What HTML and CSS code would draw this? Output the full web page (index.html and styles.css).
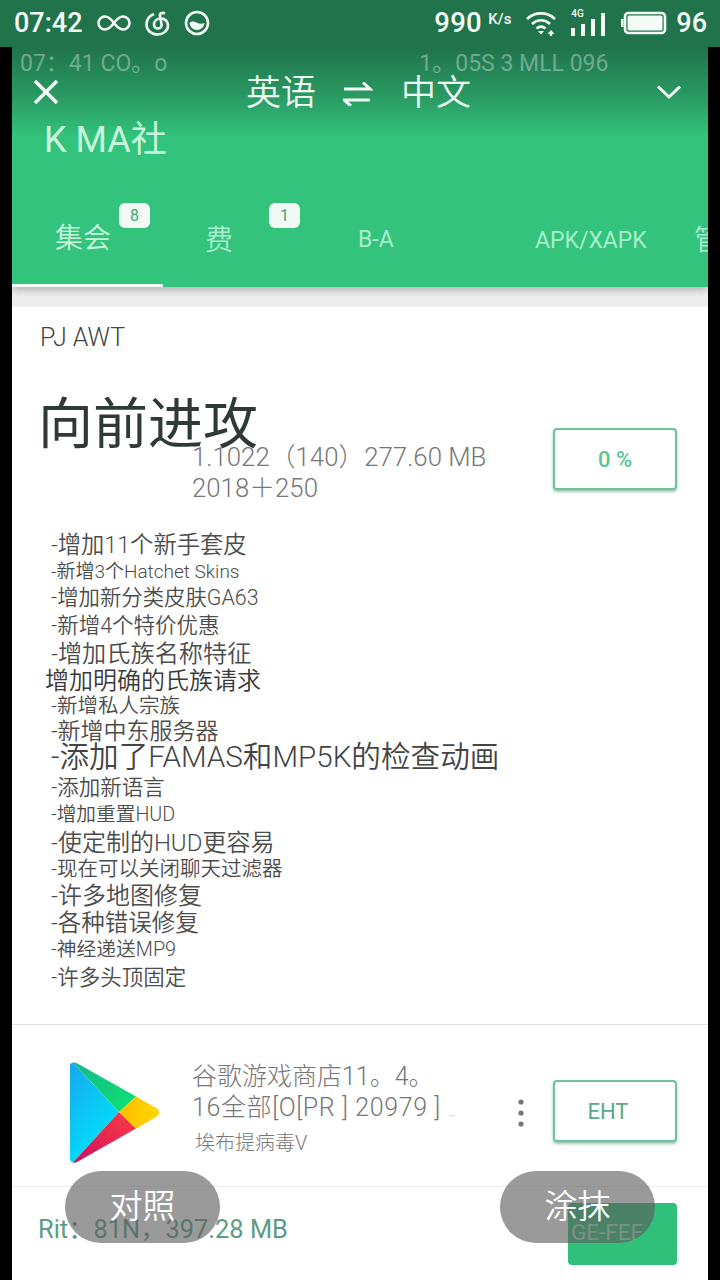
FILE: index.html
```html
<!DOCTYPE html>
<html lang="zh">
<head>
<meta charset="utf-8">
<title>APK</title>
<link rel="stylesheet" href="styles.css">
</head>
<body>
<div class="status">
  <span class="clock">07:42</span>
  <svg class="ic-inf" viewBox="0 0 34 20"><path d="M17 10c-3-4-5.500-6.500-9-6.500a6.500 6.500 0 0 0 0 13c3.500 0 6-2.500 9-6.500s5.500-6.500 9-6.500a6.500 6.500 0 0 1 0 13c-3.500 0-6-2.500-9-6.500z"/></svg>
  <svg class="ic-cloud" viewBox="0 0 26 26"><path d="M9 4C4 6 1.500 10 1.500 14.500C1.500 20.500 6.500 24.500 12.500 24.500C18.500 24.500 23 20.500 23 15.500C23 11.500 20 8.500 16 8.500C12 8.500 9 11 9 14.500C9 17 11 18.500 13 18.500C15.500 18.500 17 16.500 16.500 14L15 6C14.500 3.500 17 2 20 3.500"/></svg>
  <svg class="ic-drop" viewBox="0 0 26 26"><circle cx="13" cy="13" r="11"/><path class="fill" d="M5.500 13c3-2.500 5-1.500 7.500-.3s5 1.300 7.500.3c-.5 4-3.500 7-7.500 7s-7-3-7.500-7z"/></svg>
  <span class="status-gap"></span>
  <span class="speed">990</span>
  <span class="speed-unit">K/s</span>
  <svg class="ic-wifi" viewBox="0 0 32 26"><path d="M2 9c8-7.500 20-7.500 28 0M7 14c5.500-5 12.500-5 18 0M11.500 18.500c3-2.500 6-2.500 9 0"/><path class="fill" d="M13 21h6l-3 3.500zM26 20l3.500 4h-2.300v2h-2.400v-2h-2.300z"/></svg>
  <span class="signal">
    <span class="tag-4g">4G</span>
    <svg class="ic-bars" viewBox="0 0 38 24"><path class="fill" d="M1 15h4v8H1zM11 11h4v12h-4zM21 6h4v17h-4zM31 0h4v23h-4z"/></svg>
  </span>
  <svg class="ic-batt" viewBox="0 0 46 24"><rect x="4" y="2" width="40" height="20" rx="3.500"/><rect class="fill" x="6.500" y="4.500" width="35" height="15" rx="1.500"/><path class="fill" d="M0 8h2.500v8H0z"/></svg>
  <span class="level">96</span>
</div>

<div class="frame">
  <main class="screen">
    <header class="head">
      <div class="ghost"><span>07：41 CO。o</span><span class="ghost-right">1。05S 3 MLL 096</span></div>
      <div class="bar">
        <svg class="ic-close" viewBox="0 0 28 28"><path d="M3 3l22 22M25 3L3 25"/></svg>
        <span class="lang lang-from">英语</span>
        <svg class="ic-swap" viewBox="0 0 30 24"><path d="M1 7h26l-7-6.500M27 18H1l7 6"/></svg>
        <span class="lang">中文</span>
        <svg class="ic-chev" viewBox="0 0 26 16"><path d="M2 2.500l11 10.500L24 2.500"/></svg>
      </div>
      <div class="app-name">K MA社</div>
      <nav class="tabs">
        <div class="tab tab-active"><span class="tab-cn">集会</span><span class="badge b1">8</span></div>
        <div class="tab tab-2"><span class="tab-cn">费</span><span class="badge b2">1</span></div>
        <div class="tab tab-3">B-A</div>
        <div class="tab tab-4">APK/XAPK</div>
        <div class="tab tab-5"><span class="tab-cn">管</span></div>
      </nav>
    </header>
    <div class="strip"></div>
    <section class="card">
      <h2 class="section">PJ AWT</h2>
      <div class="update">
        <h1 class="title">向前进攻</h1>
        <div class="update-row">
          <p class="meta">1.1022（140）277.60 MB<br>2018＋250</p>
          <button class="btn btn-progress">0 %</button>
        </div>
      </div>
      <ul class="changes">
        <li class="l1">-增加11个新手套皮</li>
        <li class="l2">-新增3个Hatchet Skins</li>
        <li class="l3">-增加新分类皮肤GA63</li>
        <li class="l4">-新增4个特价优惠</li>
        <li class="l5">-增加氏族名称特征</li>
        <li class="l6">增加明确的氏族请求</li>
        <li class="l7">-新增私人宗族</li>
        <li class="l8">-新增中东服务器</li>
        <li class="l9">-添加了FAMAS和MP5K的检查动画</li>
        <li class="l10">-添加新语言</li>
        <li class="l11">-增加重置HUD</li>
        <li class="l12">-使定制的HUD更容易</li>
        <li class="l13">-现在可以关闭聊天过滤器</li>
        <li class="l14">-许多地图修复</li>
        <li class="l15">-各种错误修复</li>
        <li class="l16">-神经递送MP9</li>
        <li class="l17">-许多头顶固定</li>
      </ul>
      <div class="app-row">
        <svg class="play" viewBox="0 0 90 102">
          <defs>
            <linearGradient id="pb" x1="0" y1="0" x2="0.6" y2="1"><stop offset="0" stop-color="#16a8ee"/><stop offset="1" stop-color="#00e5fb"/></linearGradient>
            <linearGradient id="pg" x1="0" y1="0" x2="1" y2="1"><stop offset="0" stop-color="#17b98c"/><stop offset="1" stop-color="#0be371"/></linearGradient>
            <linearGradient id="pr" x1="1" y1="0" x2="0" y2="1"><stop offset="0" stop-color="#ff3b44"/><stop offset="1" stop-color="#c9125f"/></linearGradient>
            <linearGradient id="py" x1="0" y1="0" x2="1" y2="0"><stop offset="0" stop-color="#ffbd00"/><stop offset="1" stop-color="#ffd800"/></linearGradient>
          </defs>
          <path fill="url(#pb)" d="M1 4C1 2 2 1 4 .6L50 50 4 100.500C2 100 1 99 1 97z"/>
          <path fill="url(#pg)" d="M4 .6c1-.3 2.500-.2 4 .6L67 34.500 50 50z"/>
          <path fill="url(#pr)" d="M50 50l17 16.500L8 100c-1.500 .8-3 .9-4 .5z"/>
          <path fill="url(#py)" d="M67 34.500L87 46c4 2.300 4 6.500 0 9L67 66.500 50 50z"/>
        </svg>
        <div class="app-info">
          <div class="app-title">谷歌游戏商店11。4。<br><span class="app-title-2">16全部[O[PR ] 20979 ]</span><span class="dots-text">...</span></div>
          <div class="app-sub">埃布提病毒V</div>
        </div>
        <svg class="ic-more" viewBox="0 0 8 30"><circle cx="4" cy="4" r="2.600"/><circle cx="4" cy="15" r="2.600"/><circle cx="4" cy="26" r="2.600"/></svg>
        <button class="btn btn-eht">EHT</button>
      </div>
      <footer class="foot">
        <span class="foot-text">Rit：81N，397.28 MB</span>
        <button class="btn-solid">GE-FEF</button>
      </footer>
    </section>
  </main>
</div>
<div class="pill pill-left">对照</div>
<div class="pill pill-right">涂抹</div>
</body>
</html>
```
FILE: styles.css
```css
* { box-sizing: border-box; }
html, body { margin: 0; padding: 0; }
body {
  width: 720px;
  height: 1280px;
  overflow: hidden;
  position: relative;
  background: #000;
  font-family: Roboto, "Noto Sans CJK SC", sans-serif;
}
svg { display: block; flex: none; }
ul, h1, h2, p { margin: 0; padding: 0; }
li { list-style: none; }
button { font-family: inherit; padding: 0; }

.status {
  height: 47px;
  background: #20734a;
  color: #f4fbf7;
  display: flex;
  align-items: center;
  padding: 0 13px 2px 14px;
  font-weight: 500;
  font-size: 27px;
}
.status svg { fill: none; stroke: #f4fbf7; stroke-width: 2.600; }
.status svg .fill { fill: #f4fbf7; stroke: none; }
.clock { width: 70px; }
.ic-inf { width: 34px; height: 20px; margin-left: 13px; }
.ic-cloud { width: 26px; height: 26px; margin-left: 14px; }
.ic-drop { width: 26px; height: 26px; margin-left: 13px; }
.status-gap { flex: 1; }
.speed { width: 53px; letter-spacing: .2px; font-size: 27.500px; }
.speed-unit { font-size: 15px; width: 21px; margin: -8px 0 0 1px; white-space: nowrap; }
.ic-wifi { width: 32px; height: 26px; margin-left: 16px; }
.signal { position: relative; margin-left: 13px; width: 38px; height: 24px; display: block; }
.tag-4g { position: absolute; left: 1px; top: -3px; font-size: 10px; line-height: 11px; }
.ic-bars { width: 38px; height: 24px; margin-top: 2px; }
.ic-batt { width: 46px; height: 24px; margin-left: 13px; }
.level { margin-left: 9px; }

.frame { height: 1233px; padding: 0 12px; background: #000; }
.screen { height: 1233px; background: #fff; overflow: hidden; }

.head {
  height: 240px;
  background: linear-gradient(180deg, #20734c 0, #2a9a63 50px, #33c37c 90px);
  box-shadow: 0 3px 8px rgba(0, 0, 0, .25);
  position: relative;
  overflow: hidden;
}
.ghost {
  height: 23px;
  padding: 5px 0 0 8px;
  display: flex;
  color: rgba(255, 255, 255, .36);
  font-size: 23px;
  line-height: 23px;
  white-space: nowrap;
}
.ghost-right { margin-left: 252px; }
.bar {
  height: 44px;
  display: flex;
  align-items: center;
  padding-left: 20px;
  color: #eefaf4;
}
.bar svg { fill: none; stroke: #f2fbf6; }
.ic-close { width: 28px; height: 28px; stroke-width: 3.500; }
.lang { font-size: 35px; line-height: 44px; font-weight: 350; margin-top: 4px; }
.lang-from { margin-left: 186px; }
.ic-swap { width: 30px; height: 24px; stroke-width: 3; margin: 3px 28px 0 27px; }
.ic-chev { width: 26px; height: 16px; stroke-width: 3; margin: 0 0 0 185px; }
.app-name { margin: 1px 0 0 32px; font-size: 36px; line-height: 50px; color: #c8f5dd; font-weight: 400; }

.tabs { display: flex; height: 99px; margin-top: 23px; color: #a9eecb; font-size: 23px; white-space: nowrap; overflow: hidden; position: relative; align-items: center; }
.tab { position: relative; height: 99px; display: flex; align-items: center; flex: none; }
.tab-cn { font-size: 28px; font-weight: 350; }
.tab-active { width: 151px; padding-left: 43px; border-bottom: 3px solid #f6fffa; color: #c8f5dd; }
.tab-2 { width: 153px; padding-left: 42px; }
.tab-3 { width: 219px; padding: 4px 0 0 42px; }
.tab-4 { width: 159px; padding-top: 5px; }
.tab-5 { width: 20px; }
.badge {
  position: absolute;
  top: 15px;
  width: 31px;
  height: 25px;
  background: #f2f8f4;
  border-radius: 6px;
  color: #41a874;
  font-size: 16px;
  line-height: 25px;
  text-align: center;
}
.b1 { left: 107px; }
.b2 { left: 106px; }

.strip { height: 20px; background: #eeeeee; }
.card { background: #fff; height: 973px; position: relative; }
.section { padding: 16px 0 0 28px; font-size: 25px; line-height: 30px; font-weight: 300; color: #444; }
.update { padding-left: 28px; }
.title { margin: 36px 0 0 -2px; font-size: 55px; line-height: 70px; font-weight: 400; color: #2f3a38; height: 54px; }
.update-row { display: flex; padding-left: 152px; align-items: flex-start; margin-top: -1px; }
.meta { width: 361px; font-size: 25.800px; line-height: 31px; font-weight: 300; color: #777; white-space: nowrap; }
.btn {
  background: #fff;
  border: 2px solid #6cc39c;
  border-radius: 4px;
  box-shadow: 0 2px 3px rgba(40, 120, 85, .45);
  flex: none;
  width: 124px;
}
.btn-progress { height: 62px; margin-top: -14px; color: #58c692; font-size: 22px; font-weight: 500; }

.changes { margin-top: 26px; color: #4c4c4c; white-space: nowrap; font-weight: 350; }
.changes li { padding-left: 39px; display: flex; align-items: center; }
.l1 { height: 26px; font-size: 23.300px; }
.l2 { height: 26px; font-size: 19px; }
.l3 { height: 27px; font-size: 21.400px; }
.l4 { height: 28px; font-size: 21.500px; }
.l5 { height: 28px; font-size: 24.200px; }
.changes .l6 { height: 26px; font-size: 24px; padding-left: 33px; color: #3a3a3a; }
.l7 { height: 26px; font-size: 20.500px; }
.l8 { height: 24px; font-size: 23px; }
.l9 { height: 27px; font-size: 29.600px; color: #444; }
.l10 { height: 28px; font-size: 21.500px; margin-top: 3px; }
.l11 { height: 27px; font-size: 19.700px; }
.l12 { height: 28px; font-size: 24px; }
.l13 { height: 26px; font-size: 20.500px; }
.l14 { height: 27px; font-size: 24px; }
.l15 { height: 27px; font-size: 23.500px; }
.l16 { height: 27px; font-size: 19.800px; }
.l17 { height: 29px; font-size: 21.500px; }

.app-row {
  margin-top: 34px;
  border-top: 1px solid #e2e2e2;
  height: 162px;
  display: flex;
  align-items: flex-start;
  padding: 37px 0 0 57px;
  position: relative;
}
.play { width: 90px; height: 102px; }
.app-info { width: 330px; margin-left: 33px; white-space: nowrap; }
.app-title { font-size: 25px; line-height: 31px; color: #777; font-weight: 300; margin-top: -1px; }
.app-title-2 { letter-spacing: .6px; }
.dots-text { font-size: 9px; margin-left: 8px; }
.app-sub { font-size: 20px; line-height: 28px; color: #777; margin: 0 0 0 3px; font-weight: 300; }
.ic-more { width: 8px; height: 30px; fill: #777; margin: 36px 0 0 -5px; }
.btn-eht { width: 124px; height: 62px; margin: 18px 0 0 28px; padding-right: 14px; color: #58a988; font-size: 22px; }

.foot {
  border-top: 1px solid #ededed;
  height: 86px;
  display: flex;
  align-items: center;
  justify-content: space-between;
  padding: 0 31px 0 26px;
}
.foot-text { font-size: 25.400px; color: #5d9c82; font-weight: 400; margin-top: -6px; }
.btn-solid {
  width: 109px;
  height: 62px;
  margin-top: 8px;
  background: #31c079;
  border: 0;
  border-radius: 4px;
  color: #a6e6c6;
  font-size: 22.500px;
  text-align: left;
  padding: 0 0 4px 3px;
}

.pill {
  position: absolute;
  top: 1171px;
  width: 155px;
  height: 72px;
  border-radius: 36px;
  background: rgba(92, 92, 92, .62);
  color: #fff;
  font-size: 33px;
  line-height: 72px;
  text-align: center;
  font-weight: 350;
}
.pill-left { left: 65px; }
.pill-right { left: 500px; }
```
